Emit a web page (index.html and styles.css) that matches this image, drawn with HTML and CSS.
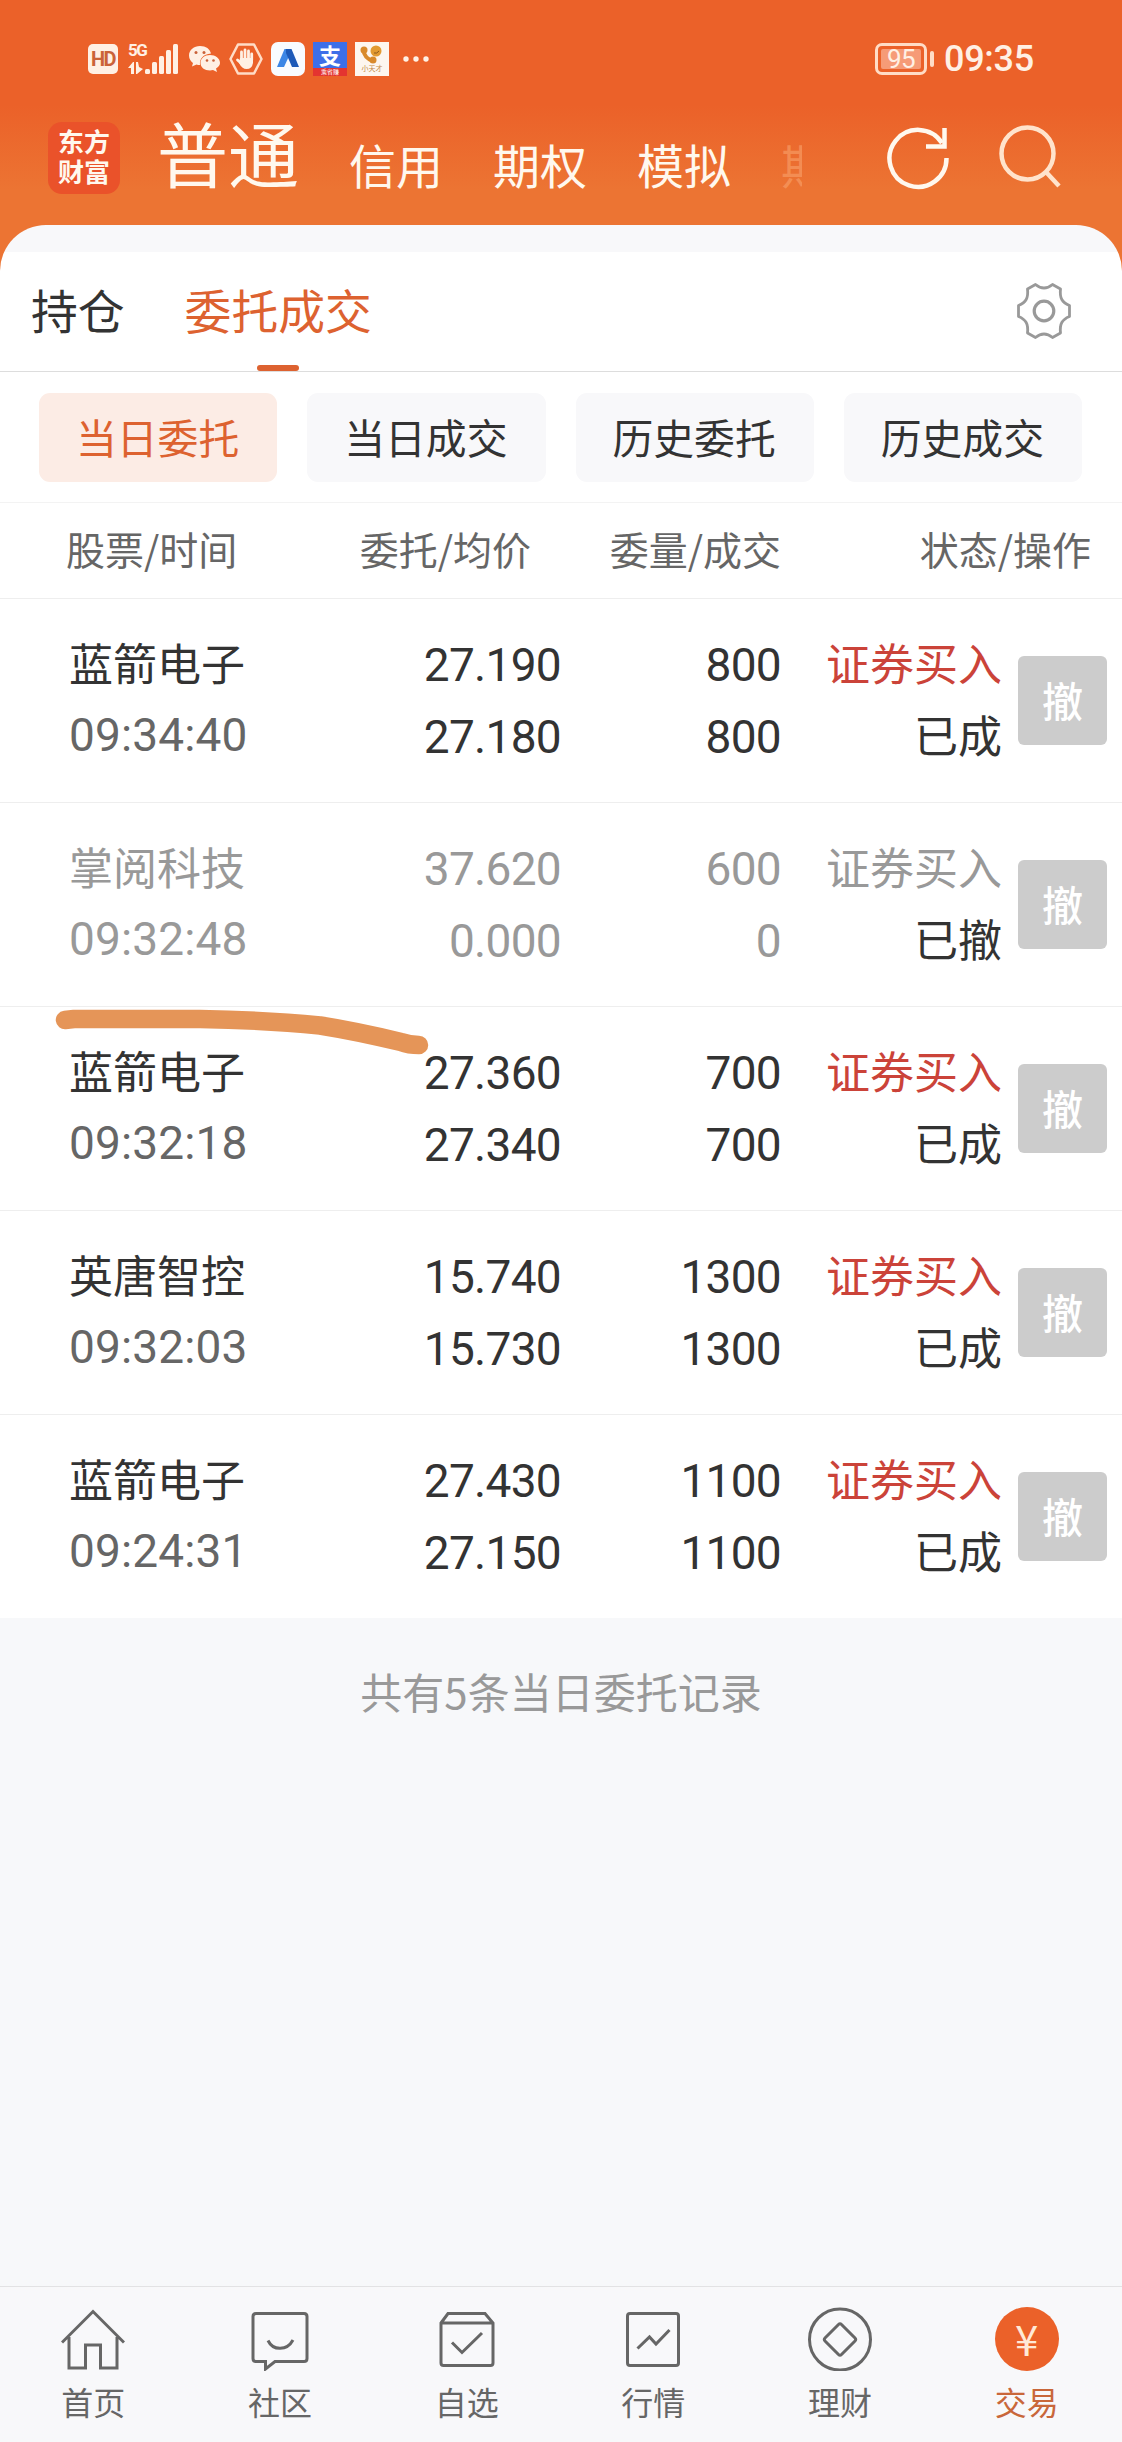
FILE: index.html
```html
<!DOCTYPE html>
<html lang="zh-CN">
<head>
    <meta charset="UTF-8">
    <meta name="viewport" content="width=device-width, initial-scale=1.0">
    <title>委托成交</title>
    <link rel="stylesheet" href="styles.css">
</head>
<body>

    <header class="top">
        <!-- Phone status bar -->
        <div class="status-bar">
            <span class="hd">HD</span>
            <div class="signal">
                <div class="signal-left">
                    <span class="net">5G</span>
                    <svg width="16" height="12" viewBox="0 0 16 12" fill="#fff0e4"><path d="M0 6L5 0H6V12H3V6ZM8 0H10L11 5L15 7L9 12H8Z"/></svg>
                </div>
                <svg width="34" height="32" viewBox="0 0 34 32" fill="#fff0e4">
                    <rect x="0" y="26" width="5" height="5" rx="1.5"/>
                    <rect x="7" y="19" width="5" height="12" rx="1.5"/>
                    <rect x="14" y="13" width="5" height="18" rx="1.5"/>
                    <rect x="21" y="7" width="5" height="24" rx="1.5"/>
                    <rect x="28" y="1" width="5" height="30" rx="1.5"/>
                </svg>
            </div>
            <svg class="wechat" width="31" height="28" viewBox="0 0 31 28">
                <path fill="#fff0e4" d="M11 1C5 1 0 5 0 10.500C0 14 2 16.500 4 18L3 21.500L7.500 19.500Q9 20 11 20Q10 10 22 8.500C21 4 17 1 11 1Z"/>
                <path fill="#fff0e4" d="M21 10C15.500 10 11.500 13.500 11.500 18C11.500 22.500 15.500 25.500 21 25.500L24 25L28 27L27 23.500C29.500 22 31 20 31 18C31 13.500 26.500 10 21 10Z"/>
                <g fill="#c9623a"><circle cx="7" cy="7.500" r="1.500"/><circle cx="15" cy="7.500" r="1.500"/><circle cx="18" cy="15.500" r="1.300"/><circle cx="24.500" cy="15.500" r="1.300"/></g>
            </svg>
            <svg class="hand" width="34" height="32" viewBox="0 0 34 32">
                <path fill="none" stroke="#ffdcc6" stroke-width="2.500" stroke-linejoin="round" d="M9 1.500H25L32.500 16L25 30.500H9L1.500 16Z"/>
                <path fill="none" stroke="#fff0e4" stroke-width="2.800" stroke-linecap="round" d="M12.500 17V9M16 16V7M19.500 16V8M22.700 17V11M13 21L8.500 17"/>
                <path fill="#fff0e4" d="M11 15H24V20Q23 26 17.500 26Q13 26 10 20Z"/>
            </svg>
            <svg class="app" width="34" height="34" viewBox="0 0 34 34">
                <rect width="34" height="34" rx="7" fill="#f8fbff"/>
                <path fill="#3b86e6" d="M6 25L13.500 7H17L19 12L13 25Z"/>
                <path fill="#1c59b8" d="M15 7H20.500L28 25H21L15 11Z"/>
            </svg>
            <div class="app alipay">
                <span class="alipay-mark">支</span>
                <span class="alipay-tag">乘省赚</span>
            </div>
            <div class="app watch">
                <svg width="24" height="19" viewBox="0 0 24 19">
                    <path fill="none" stroke="#d98a2b" stroke-width="4" stroke-linecap="round" d="M3.500 5Q4 13 13 16"/>
                    <circle cx="4" cy="5" r="3.500" fill="#d98a2b"/><circle cx="13" cy="15" r="3.500" fill="#d98a2b"/>
                    <circle cx="16" cy="6" r="5.500" fill="#e29a31"/>
                    <path fill="none" stroke="#8a5a20" d="M14 8Q17 9 19 6"/>
                </svg>
                <span>小天才</span>
            </div>
            <svg class="more" width="26" height="6" viewBox="0 0 26 6" fill="#fff0e4"><circle cx="3" cy="3" r="2.700"/><circle cx="13" cy="3" r="2.700"/><circle cx="23" cy="3" r="2.700"/></svg>
            <div class="battery"><span>95</span></div>
            <i class="battery-tip"></i>
            <span class="clock">09:35</span>
        </div>

        <!-- Account types -->
        <nav class="accounts">
            <div class="logo">东方<br>财富</div>
            <span class="account current">普通</span>
            <span class="account">信用</span>
            <span class="account">期权</span>
            <span class="account">模拟</span>
            <span class="account faded">期</span>
            <svg class="refresh" width="66" height="66" viewBox="0 0 66 66" fill="none" stroke="#fff8ee" stroke-width="4.500">
                <path d="M61.500 34A28.500 28.500 0 1 1 57 19"/>
                <path d="M59.500 4V22.500H41"/>
            </svg>
            <svg class="search" width="66" height="66" viewBox="0 0 66 66" fill="none" stroke="#ffe3cc" stroke-width="4.500">
                <circle cx="29.500" cy="29.500" r="26"/>
                <path d="M48 48L61 62"/>
            </svg>
        </nav>
    </header>

    <main class="panel">
        <div class="tabs">
            <a class="tab">持仓</a>
            <a class="tab selected">委托成交</a>
            <svg class="gear" width="58" height="60" viewBox="0 0 58 60" fill="none" stroke="#999" stroke-width="2.800" stroke-linejoin="round">
                <path d="M20.500 3.500Q29 10.500 37.500 3.500L45.500 8C44.500 17 47 21.500 54.500 24.500V35.500C47 38.500 44.500 43 45.500 52L37.500 56.500Q29 49.500 20.500 56.500L12.500 52C13.500 43 11 38.500 3.500 35.500V24.500C11 21.500 13.500 17 12.500 8Z"/>
                <circle cx="29" cy="30" r="9.800" stroke-width="3.200"/>
            </svg>
        </div>

        <div class="filters">
            <button class="filter on">当日委托</button>
            <button class="filter">当日成交</button>
            <button class="filter">历史委托</button>
            <button class="filter">历史成交</button>
        </div>

        <div class="head">
            <span>股票/时间</span>
            <span>委托/均价</span>
            <span>委量/成交</span>
            <span>状态/操作</span>
        </div>

        <!-- Today's orders -->
        <div class="order">
            <div class="cell stock"><span>蓝箭电子</span><span class="num time">09:34:40</span></div>
            <div class="cell num"><span>27.190</span><span>27.180</span></div>
            <div class="cell num"><span>800</span><span>800</span></div>
            <div class="cell"><span class="buy">证券买入</span><span>已成</span></div>
            <button class="cancel">撤</button>
        </div>
        <div class="order revoked">
            <div class="cell stock"><span>掌阅科技</span><span class="num time">09:32:48</span></div>
            <div class="cell num"><span>37.620</span><span>0.000</span></div>
            <div class="cell num"><span>600</span><span>0</span></div>
            <div class="cell"><span class="buy">证券买入</span><span class="state">已撤</span></div>
            <button class="cancel">撤</button>
        </div>
        <div class="order">
            <!-- Marker stroke drawn over the row -->
            <svg class="marker" width="400" height="60" viewBox="0 0 400 60" fill="none" stroke="#e59558" stroke-width="18.500" stroke-linecap="round" stroke-linejoin="round">
                <path d="M15 14L24 13H150Q215 14 270 19.500Q305 25 351 36Q359 39 369 39"/>
            </svg>
            <div class="cell stock"><span>蓝箭电子</span><span class="num time">09:32:18</span></div>
            <div class="cell num"><span>27.360</span><span>27.340</span></div>
            <div class="cell num"><span>700</span><span>700</span></div>
            <div class="cell"><span class="buy">证券买入</span><span>已成</span></div>
            <button class="cancel">撤</button>
        </div>
        <div class="order">
            <div class="cell stock"><span>英唐智控</span><span class="num time">09:32:03</span></div>
            <div class="cell num"><span>15.740</span><span>15.730</span></div>
            <div class="cell num"><span>1300</span><span>1300</span></div>
            <div class="cell"><span class="buy">证券买入</span><span>已成</span></div>
            <button class="cancel">撤</button>
        </div>
        <div class="order">
            <div class="cell stock"><span>蓝箭电子</span><span class="num time">09:24:31</span></div>
            <div class="cell num"><span>27.430</span><span>27.150</span></div>
            <div class="cell num"><span>1100</span><span>1100</span></div>
            <div class="cell"><span class="buy">证券买入</span><span>已成</span></div>
            <button class="cancel">撤</button>
        </div>
    </main>

    <p class="summary">共有5条当日委托记录</p>

    <nav class="bottom-nav">
        <a class="nav-item">
            <svg viewBox="0 0 64 64"><path d="M1 35.500L32 4.500L63 35.500M8 30V61H24.500V38H39.500V61H56V30"/></svg>
            首页
        </a>
        <a class="nav-item">
            <svg viewBox="0 0 64 64"><path d="M8 6.500H56Q59 6.500 59 9.500V51.500Q59 54.500 56 54.500H27L17.500 62V54.500H8Q5 54.500 5 51.500V9.500Q5 6.500 8 6.500ZM20 33.500C25 44 39 44 45 33"/></svg>
            社区
        </a>
        <a class="nav-item">
            <svg viewBox="0 0 64 64"><path d="M6 16L13 6.500H50L58 16V56Q58 58.500 55.500 58.500H8.500Q6 58.500 6 56ZM6 16H58M17 35.500L27 45.500L47 26"/></svg>
            自选
        </a>
        <a class="nav-item">
            <svg viewBox="0 0 64 64"><rect x="6.500" y="6.500" width="51" height="52" rx="2.500"/><path d="M16.500 41.500L28.500 30L35 37L48.500 23"/></svg>
            行情
        </a>
        <a class="nav-item">
            <svg viewBox="0 0 64 64"><circle cx="32" cy="32.500" r="30.500"/><path d="M30.500 17.500Q32 16 33.500 17.500L47 31Q48.500 32.500 47 34L33.500 47.500Q32 49 30.500 47.500L17 34Q15.500 32.500 17 31Z"/></svg>
            理财
        </a>
        <a class="nav-item active">
            <span class="yuan">¥</span>
            交易
        </a>
    </nav>

</body>
</html>
```
FILE: styles.css
```css
/* General Reset */
* {
    margin: 0;
    padding: 0;
    box-sizing: border-box;
}

body {
    display: flex;
    flex-direction: column;
    width: 1122px;
    height: 2442px;
    background: #f7f8fa;
    color: #333;
    font-family: "Noto Sans CJK SC", sans-serif;
    overflow: hidden;
}

svg {
    display: block;
    flex: none;
}

button {
    border: none;
    font-family: inherit;
}

/* Orange header */
.top {
    height: 275px;
    background: linear-gradient(#eb6129 0, #eb6129 105px, #ec7433 190px, #ec7433 100%);
}

.status-bar {
    display: flex;
    align-items: center;
    height: 88px;
    padding: 29px 0 0 88px;
    font-family: Roboto, sans-serif;
    color: #fff0e4;
}

.hd {
    width: 30px;
    height: 30px;
    border-radius: 5px;
    background: #fff0e4;
    color: #cb6238;
    font-size: 20px;
    font-weight: 700;
    line-height: 30px;
    text-align: center;
    letter-spacing: -1.5px;
}

.signal {
    display: flex;
    margin-left: 10px;
    width: 51px;
}

.signal-left {
    width: 17px;
}

.net {
    display: block;
    height: 19px;
    font-size: 17px;
    font-weight: 700;
    line-height: 15px;
    letter-spacing: -1.5px;
}

.wechat {
    margin-left: 10px;
}

.hand {
    margin-left: 9px;
}

.app {
    width: 34px;
    height: 34px;
    margin-left: 8px;
}

.alipay {
    display: flex;
    flex-direction: column;
    background: #3d6fe8;
    color: #fff;
    font-family: "Noto Sans CJK SC", sans-serif;
    text-align: center;
}

.alipay-mark {
    height: 26px;
    font-size: 22px;
    font-weight: 700;
    line-height: 24px;
}

.alipay-tag {
    height: 8px;
    background: #e43430;
    font-size: 6px;
    line-height: 8px;
}

.watch {
    display: flex;
    flex-direction: column;
    align-items: center;
    padding-top: 3px;
    background: #fdf6ef;
    color: #c48a48;
    font: 7px/9px "Noto Sans CJK SC", sans-serif;
}

.more {
    margin-left: 14px;
}

.battery {
    width: 52px;
    height: 32px;
    margin-left: 446px;
    padding: 3px;
    border: 3px solid #ffdcc6;
    border-radius: 7px;
}

.battery span {
    display: block;
    height: 20px;
    border-radius: 2px;
    background: #f69b77;
    font-size: 26px;
    line-height: 21px;
    text-align: center;
    letter-spacing: -0.500px;
}

.battery-tip {
    width: 4px;
    height: 16px;
    margin-left: 3px;
    border-radius: 2px;
    background: #ffdcc6;
}

.clock {
    margin-left: 10px;
    font-size: 36px;
    font-weight: 500;
    line-height: 36px;
    letter-spacing: -0.3px;
}

.accounts {
    display: flex;
    height: 137px;
    padding-left: 48px;
    color: #fff8ee;
}

.logo {
    width: 72px;
    height: 72px;
    margin-top: 34px;
    padding-top: 4px;
    border-radius: 14px;
    background: #ea522a;
    font-size: 26px;
    font-weight: 700;
    line-height: 30px;
    text-align: center;
}

.account {
    margin: 44px 0 0 50px;
    font-size: 47px;
    line-height: 64px;
}

.account.current {
    margin: 31px 0 0 37px;
    font-size: 71px;
    line-height: 64px;
}

.account.faded {
    width: 21px;
    overflow: hidden;
    color: #f79a62;
    opacity: 0.7;
}

.refresh {
    margin: 36px 0 0 83px;
}

.search {
    margin: 36px 0 0 47px;
}

/* Main panel */
.panel {
    margin-top: -50px;
    padding-top: 27px;
    border-radius: 46px 46px 0 0;
    background: linear-gradient(#f8f8fa 27px, #fff 27px);
    overflow: hidden;
}

.tabs {
    display: flex;
    height: 120px;
    padding-left: 31px;
    border-bottom: 1px solid #ddd;
}

.tab {
    display: flex;
    flex-direction: column;
    align-items: center;
    height: 119px;
    padding-top: 24px;
    margin-right: 60px;
    font-size: 46.800px;
    line-height: 66px;
}

.selected {
    color: #dd6230;
}

.selected::after {
    content: "";
    width: 42px;
    height: 6px;
    margin-top: 23px;
    border-radius: 3px;
    background: #dd6230;
}

.gear {
    margin: 29px 49px 0 auto;
}

.filters {
    display: flex;
    gap: 30px;
    height: 131px;
    padding: 21px 40px 0 39px;
    border-bottom: 1px solid #f3f3f3;
}

.filter {
    flex: 1;
    height: 89px;
    padding: 0 1px 3px 0;
    border-radius: 11px;
    background: #f8f8fa;
    color: #333;
    font-size: 40.800px;
}

.filter.on {
    background: #fcece5;
    color: #dd6230;
}

.head {
    display: grid;
    grid-template-columns: 235px 230px 250px 310px;
    height: 96px;
    padding-left: 66px;
    border-bottom: 1px solid #eee;
    color: #666;
    font-size: 39px;
    line-height: 91px;
    text-align: right;
}

.head span:first-child {
    text-align: left;
}

.order {
    position: relative;
    display: grid;
    grid-template-columns: 262px 230px 220px 221px 89px;
    align-items: center;
    height: 204px;
    padding-left: 69px;
    border-bottom: 1px solid #eee;
}

.order:last-child {
    height: 203px;
    border-bottom: none;
}

.cell {
    display: flex;
    flex-direction: column;
    text-align: right;
    font-size: 44px;
    line-height: 72px;
    padding-bottom: 5px;
}

.stock {
    text-align: left;
}

.num {
    font-family: Roboto, sans-serif;
    font-size: 46px;
    letter-spacing: -0.700px;
}

.cell.num {
    padding-bottom: 0;
}

.time {
    padding-top: 2px;
    line-height: 70px;
    letter-spacing: 0.150px;
    color: #666;
}

.buy {
    color: #cb4339;
}

.revoked,
.revoked .time,
.revoked .buy {
    color: #999;
}

.revoked .state {
    color: #333;
}

.cancel {
    width: 89px;
    height: 89px;
    margin-left: 16px;
    padding-bottom: 3px;
    border-radius: 6px;
    background: #ccc;
    color: #fff;
    font-size: 41px;
    font-weight: 500;
}

.marker {
    position: absolute;
    top: -1px;
    left: 50px;
}

.summary {
    padding-top: 41px;
    color: #999;
    font-size: 42px;
    line-height: 64px;
    text-align: center;
}

/* Bottom navigation */
.bottom-nav {
    display: grid;
    grid-template-columns: repeat(6, 1fr);
    height: 156px;
    margin-top: auto;
    padding-right: 2px;
    border-top: 1px solid #e2e2e4;
    background: #f8f8fa;
}

.nav-item {
    display: flex;
    flex-direction: column;
    align-items: center;
    padding-top: 20px;
    color: #666;
    font-size: 32px;
    line-height: 60px;
}

.nav-item svg {
    width: 64px;
    height: 64px;
    fill: none;
    stroke: #666;
    stroke-width: 3px;
}

.nav-item.active {
    color: #c9673a;
}

.yuan {
    width: 64px;
    height: 64px;
    border-radius: 50%;
    background: #eb6129;
    color: #ffe9d6;
    font: 42px/62px "Noto Sans CJK SC", sans-serif;
    text-align: center;
}
```
